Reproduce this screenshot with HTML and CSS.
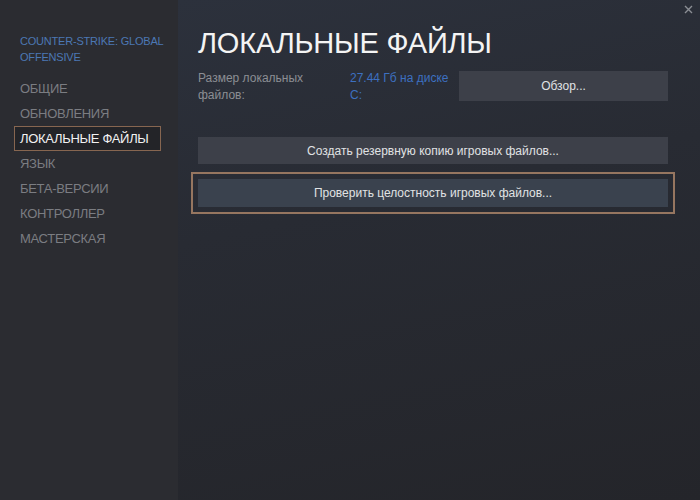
FILE: index.html
```html
<!DOCTYPE html>
<html lang="ru">
<head>
    <meta charset="UTF-8">
    <meta name="viewport" content="width=device-width, initial-scale=1.0">
    <title>Свойства: локальные файлы</title>
    <link rel="stylesheet" href="styles.css">
</head>
<body>
    <div class="window">
        <aside class="sidebar">
            <div class="game-title">COUNTER-STRIKE: GLOBAL OFFENSIVE</div>
            <nav class="nav">
                <div class="nav-item">ОБЩИЕ</div>
                <div class="nav-item">ОБНОВЛЕНИЯ</div>
                <div class="nav-item active">ЛОКАЛЬНЫЕ ФАЙЛЫ</div>
                <div class="nav-item">ЯЗЫК</div>
                <div class="nav-item">БЕТА-ВЕРСИИ</div>
                <div class="nav-item">КОНТРОЛЛЕР</div>
                <div class="nav-item">МАСТЕРСКАЯ</div>
            </nav>
        </aside>
        <main class="content">
            <h1 class="page-title">ЛОКАЛЬНЫЕ ФАЙЛЫ</h1>
            <div class="size-row">
                <div class="size-label">Размер локальных файлов:</div>
                <div class="size-value">27.44 Гб на диске C:</div>
                <button class="btn btn-browse">Обзор...</button>
            </div>
            <button class="btn btn-wide">Создать резервную копию игровых файлов...</button>
            <button class="btn btn-wide focused">Проверить целостность игровых файлов...</button>
        </main>
        <button class="close-btn" aria-label="Закрыть">
            <svg width="9" height="9" viewBox="0 0 9 9">
                <path d="M1 1 L8 8 M8 1 L1 8" stroke="#8b8e94" stroke-width="1.4" fill="none"/>
            </svg>
        </button>
    </div>
</body>
</html>
```

FILE: styles.css
```css
* {
    margin: 0;
    padding: 0;
    box-sizing: border-box;
}

body {
    width: 700px;
    height: 500px;
    overflow: hidden;
    background: #25262b;
    font-family: "Liberation Sans", Arial, sans-serif;
}

.window {
    position: relative;
    display: flex;
    height: 500px;
}

.sidebar {
    width: 178px;
    flex-shrink: 0;
    background: #2b2c31;
    padding: 33px 17px 0 14px;
}

.game-title {
    padding-left: 6px;
    margin-right: -14px;
    font-size: 11px;
    line-height: 16px;
    color: #4b78b4;
    letter-spacing: -0.2px;
}

.nav {
    margin-top: 11px;
}

.nav-item {
    height: 25px;
    line-height: 23px;
    padding: 0 5px;
    border: 1px solid transparent;
    font-size: 13px;
    color: #7b7d82;
    letter-spacing: -0.3px;
}

.nav-item.active {
    color: #f2f2f2;
    background: #232428;
    border-color: #876650;
}

.content {
    flex: 1;
    display: flex;
    flex-direction: column;
    padding: 25px 32px 0 20px;
    background: linear-gradient(168deg, #2c313c 0%, #282b33 40%, #24252a 100%);
}

.page-title {
    font-size: 29px;
    line-height: 36px;
    font-weight: normal;
    color: #f4f4f4;
    letter-spacing: -0.2px;
}

.size-row {
    display: flex;
    align-items: flex-start;
    margin-top: 9px;
}

.size-label {
    width: 152px;
    font-size: 12px;
    line-height: 17px;
    color: #8c8e94;
    padding-right: 40px;
}

.size-value {
    width: 109px;
    font-size: 12px;
    line-height: 17px;
    color: #3d70c0;
    padding-right: 8px;
}

.btn {
    border: none;
    font-family: inherit;
    font-size: 12px;
    color: #e0e2e4;
    background: #3d4049;
}

.btn-browse {
    flex: 1;
    height: 30px;
    margin-top: 1px;
}

.btn-wide {
    height: 27px;
}

.btn-wide + .btn-wide {
    margin-top: 15px;
}

.size-row + .btn-wide {
    margin-top: 33px;
}

.btn-wide.focused {
    height: 28px;
    background: #3a424e;
    outline: 2px solid #967660;
    outline-offset: 5px;
}

.close-btn {
    position: absolute;
    top: 5px;
    right: 7px;
    width: 9px;
    height: 9px;
    border: none;
    background: none;
    display: flex;
}
```
